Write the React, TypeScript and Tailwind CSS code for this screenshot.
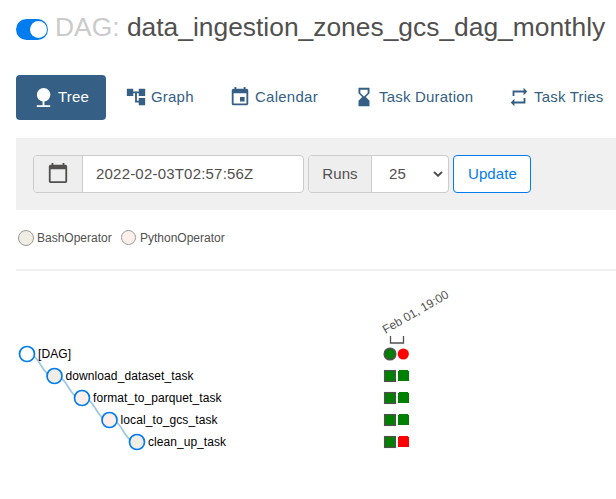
import type { ReactNode } from 'react';
import {
  MdAccountTree,
  MdCalendarToday,
  MdEvent,
  MdHourglassBottom,
  MdNature,
  MdRepeat,
} from 'react-icons/md';

function Tab({ icon, label, className }: { icon: ReactNode; label: string; className: string }) {
  return (
    <a className={`flex h-[45px] shrink-0 items-center whitespace-nowrap rounded text-[15px] ${className}`}>
      {icon}
      <span>{label}</span>
    </a>
  );
}

const tasks = [
  { name: '[DAG]', fill: '#ffffff', width: 33 },
  { name: 'download_dataset_task', fill: '#f0ede4', width: 128 },
  { name: 'format_to_parquet_task', fill: '#ffefeb', width: 128.5 },
  { name: 'local_to_gcs_task', fill: '#ffefeb', width: 97 },
  { name: 'clean_up_task', fill: '#f0ede4', width: 78 },
];

function TreeChart() {
  return (
    <svg width="616" height="228" viewBox="0 271 616 228" className="block">
      {tasks.slice(1).map((task, i) => {
        const x = 27 + i * 27.5;
        const y = 354 + i * 22;
        return (
          <path
            key={task.name}
            d={`M${x} ${y}C${x + 13.75} ${y} ${x + 13.75} ${y + 22} ${x + 27.5} ${y + 22}`}
            fill="none"
            stroke="#9ecae1"
            strokeWidth="1.8"
          />
        );
      })}
      {tasks.map((task, i) => (
        <g key={task.name}>
          <circle cx={27 + i * 27.5} cy={354 + i * 22} r="7.5" fill={task.fill} stroke="#017cee" strokeWidth="1.7" />
          <text x={38 + i * 27.5} y={358 + i * 22} fontSize="12" fill="#000" textLength={task.width}>
            {task.name}
          </text>
          {i > 0 && (
            <>
              <rect x="384.6" y={370.6 + (i - 1) * 22} width="10.8" height="10.8" fill="#008000" stroke="#51504f" strokeWidth="1.3" />
              <path
                d={`M399 ${370 + (i - 1) * 22}h9v1h1v10h-11v-10h1z`}
                fill={i === 4 ? '#ff0000' : '#008000'}
              />
            </>
          )}
        </g>
      ))}
      <circle cx="390" cy="354" r="5.7" fill="#008000" stroke="#51504f" strokeWidth="1.7" />
      <circle cx="403.3" cy="354" r="5.6" fill="#ff0000" />
      <path d="M390.5 336V343H403.5V336" fill="none" stroke="#51504f" strokeWidth="1.3" />
      <text transform="translate(385.5 334) rotate(-30)" fontSize="12" fill="#51504f" textLength="74">
        Feb 01, 19:00
      </text>
    </svg>
  );
}

export default function App() {
  return (
    <div className="h-[499px] w-[616px] overflow-hidden bg-white font-['Liberation_Sans',Arial,sans-serif] text-[#51504f]">
      <header className="flex h-[75px] items-start pl-4 pt-[9px]">
        <button className="mt-[10px] flex h-[21px] w-8 shrink-0 items-center justify-end rounded-full bg-[#017cee] pr-[1.5px]">
          <span className="size-[17px] rounded-full bg-white" />
        </button>
        <h1 className="ml-[7px] whitespace-nowrap text-[26.4px] leading-9">
          <span className="text-[#cbcbcb]">DAG:</span> <span>data_ingestion_zones_gcs_dag_monthly</span>
        </h1>
      </header>

      <nav className="flex h-[63px] pl-4 text-[#355f84]">
        <Tab
          className="w-[90px] bg-[#355f84] pl-4 tracking-[0.2px] text-white"
          icon={<MdNature className="mr-[3px] size-[23px]" />}
          label="Tree"
        />
        <Tab className="w-[105px] pl-[19px] tracking-[0.2px]" icon={<MdAccountTree className="mr-1 size-[22px] -translate-y-px" />} label="Graph" />
        <Tab className="w-[122px] pl-[18px] tracking-[0.25px]" icon={<MdEvent className="mr-1 size-[22px] -translate-y-px" />} label="Calendar" />
        <Tab className="w-[156px] pl-[20px] tracking-[0.2px]" icon={<MdHourglassBottom className="mr-1 size-[22px] -translate-y-px" />} label="Task Duration" />
        <Tab className="pl-[19px] tracking-[0.2px]" icon={<MdRepeat className="mr-1 size-[22px] -translate-y-px" />} label="Task Tries" />
      </nav>

      <form className="ml-4 flex h-[72px] bg-[#f0f0f0] pl-[17px] pt-[17px] text-[15px]">
        <div className="flex h-[38px] w-[271px] overflow-hidden rounded border border-[#ccc] bg-white">
          <span className="flex w-[49px] items-center justify-center border-r border-[#ccc] bg-[#eee]">
            <MdCalendarToday className="size-[22px] -translate-y-px" />
          </span>
          <span className="flex items-center pl-[13px] tracking-[0.2px]">2022-02-03T02:57:56Z</span>
        </div>
        <div className="ml-1 flex h-[38px] w-[141px] overflow-hidden rounded border border-[#ccc] bg-white">
          <span className="flex w-[63px] items-center justify-center border-r border-[#ccc] bg-[#eee] tracking-[0.1px]">Runs</span>
          <span className="flex flex-1 items-center justify-between pl-[17px] pr-[5px] tracking-[0.2px]">
            25
            <svg width="10" height="6" viewBox="0 0 10 6" fill="none" stroke="currentColor" strokeWidth="2">
              <path d="M1 1L5 4.7L9 1" />
            </svg>
          </span>
        </div>
        <button className="ml-1 h-[38px] w-[78px] rounded border border-[#017cee] bg-white pl-px tracking-[0.1px] text-[#017cee]">Update</button>
      </form>

      <div className="ml-4 flex h-[61px] items-start border-b-2 border-[#f0f0f0] pl-[2px] pt-[20px] text-[12px] leading-4">
        <span className="mr-[3px] size-4 rounded-full border border-[#999] bg-[#f0ede4]" />
        <span className="w-[84px]">BashOperator</span>
        <span className="mr-1 size-[15px] rounded-full border border-[#999] bg-[#ffefeb]" />
        <span>PythonOperator</span>
      </div>

      <TreeChart />
    </div>
  );
}
